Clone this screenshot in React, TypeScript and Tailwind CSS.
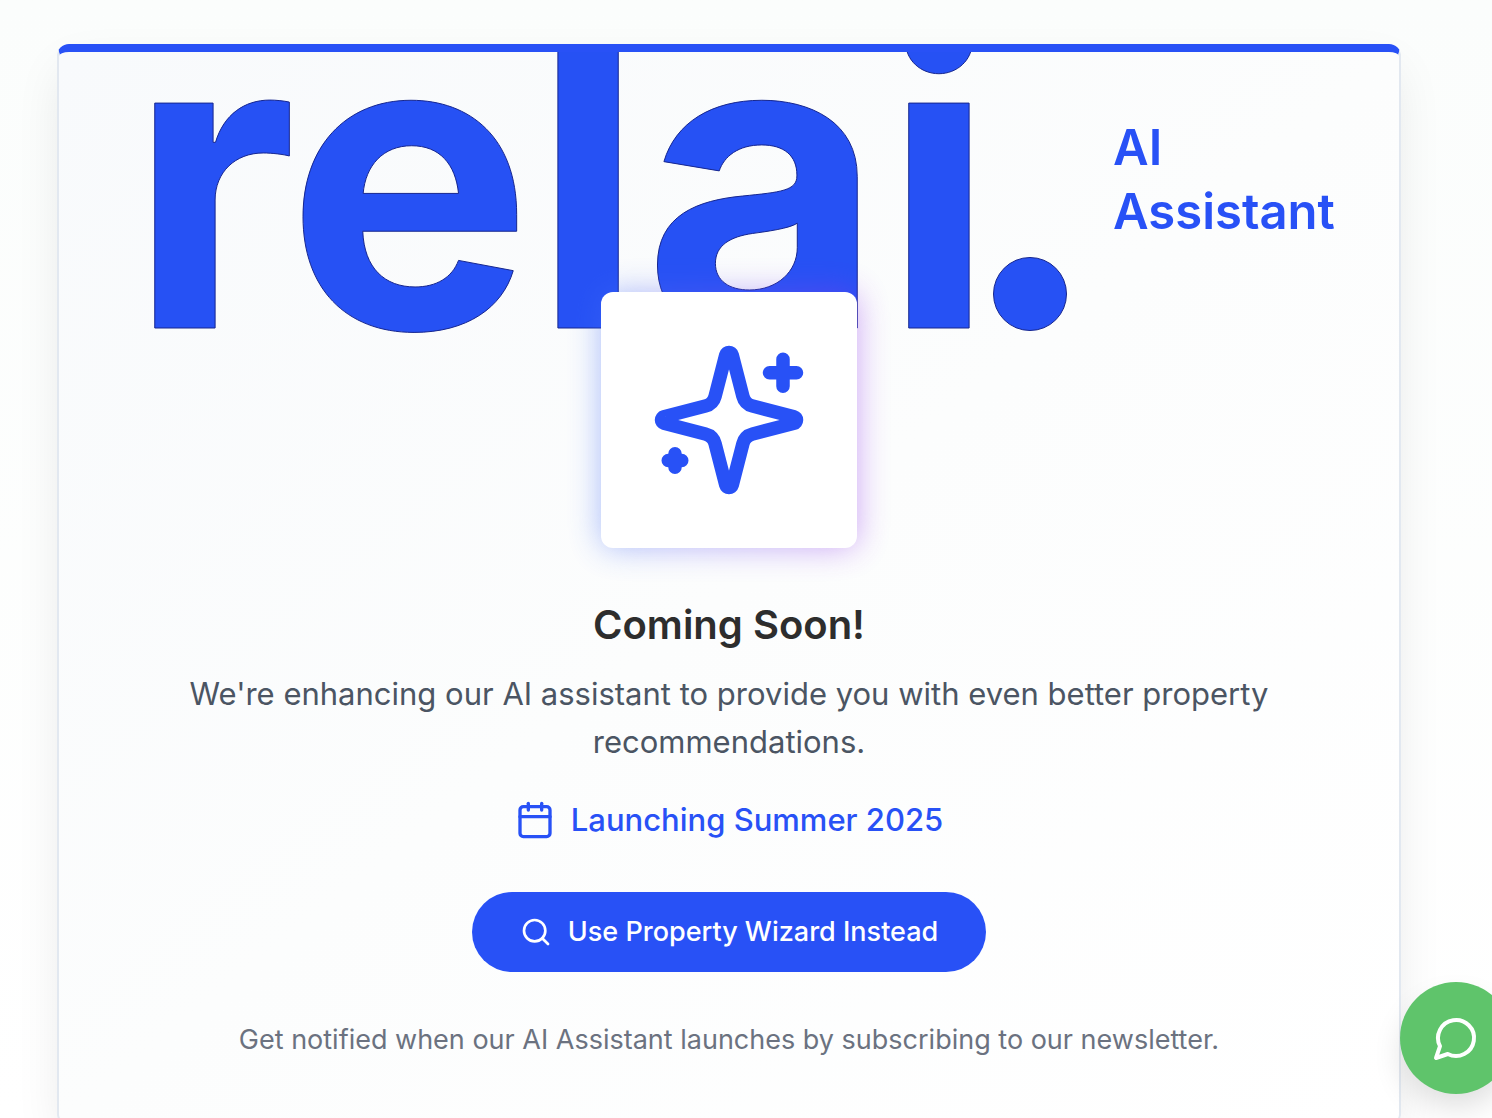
import React from "react";
import { Calendar, Search } from "lucide-react";

function Logo() {
  return (
    <svg
      viewBox="0 0 974 128"
      className="h-[128px] w-[974px] shrink-0 overflow-visible fill-[#2651f4] stroke-[#16268f] stroke-1"
      role="img"
      aria-label="relai."
    >
      <text x="6" y="212" className="font-['Inter',sans-serif] text-[412px] font-bold">
        relai
      </text>
      <circle cx="907" cy="178" r="36.5" />
    </svg>
  );
}

function Sparkles() {
  return (
    <svg
      viewBox="0 0 24 24"
      className="size-[162px] fill-none stroke-[#2851f6] stroke-2"
      strokeLinecap="round"
      strokeLinejoin="round"
      aria-hidden="true"
    >
      <path d="M9.937 15.5A2 2 0 0 0 8.5 14.063l-6.135-1.582a.5.5 0 0 1 0-.962L8.5 9.936A2 2 0 0 0 9.937 8.5l1.582-6.135a.5.5 0 0 1 .963 0L14.063 8.5A2 2 0 0 0 15.5 9.937l6.135 1.581a.5.5 0 0 1 0 .964L15.5 14.063a2 2 0 0 0-1.437 1.437l-1.582 6.135a.5.5 0 0 1-.963 0z" />
      <path d="M20 3v4M22 5h-4M4 17v2M5 18H3" />
    </svg>
  );
}

function ChatButton() {
  return (
    <button
      type="button"
      aria-label="Open chat"
      className="fixed -right-5 bottom-6 z-20 flex size-28 items-center justify-center rounded-full bg-[#5fc46b] shadow-[0_16px_32px_-4px_rgba(0,0,0,0.14)]"
    >
      <svg
        viewBox="0 0 24 24"
        className="size-12 fill-none stroke-white stroke-2"
        strokeLinecap="round"
        strokeLinejoin="round"
        aria-hidden="true"
      >
        <path d="M7.9 20A9 9 0 1 0 4 16.1L2 22Z" />
      </svg>
    </button>
  );
}

export default function App() {
  return (
    <div className="h-screen overflow-hidden bg-linear-to-b from-[#fbfdfc] to-white pt-11 pr-[91px] pl-[57px] font-['Inter',sans-serif]">
      <main className="flex flex-col items-center overflow-hidden rounded-xl border-x-2 border-t-8 border-b-2 border-x-[#e2e8f0] border-t-[#2851f6] border-b-[#e2e8f0] bg-linear-to-br from-[#f8fafc] via-[#fcfdfd] to-white px-16 pt-16 pb-16 text-center shadow-[0_20px_50px_-8px_rgba(0,0,0,0.10)]">
        <header className="flex items-center justify-center gap-4">
          <Logo />
          <h1 className="text-left text-[49px] leading-[64px] font-semibold text-[#2851f6]">
            AI
            <br />
            Assistant
          </h1>
        </header>

        <div className="relative z-10 mt-12">
          <div className="absolute inset-0 rounded-xl bg-linear-to-r from-[#3b6ef6] to-[#9333ea] opacity-45 blur-lg" />
          <div className="relative flex size-64 items-center justify-center rounded-xl bg-white">
            <Sparkles />
          </div>
        </div>

        <h2 className="mt-12 text-[40px] leading-[58px] font-semibold text-[#2d2d2d]">Coming Soon!</h2>
        <p className="mt-4 text-[31px] leading-[48px] text-[#4b5563]">
          We're enhancing our AI assistant to provide you with even better property recommendations.
        </p>

        <div className="mt-[30px] flex items-center gap-4 text-[31px] leading-[48px] font-medium text-[#2851f6]">
          <Calendar className="size-10" aria-hidden="true" />
          <span>Launching Summer 2025</span>
        </div>

        <button
          type="button"
          className="mt-12 flex h-20 items-center gap-4 rounded-full bg-[#2851f6] px-12 text-[27px] font-medium text-white"
        >
          <Search className="size-8" aria-hidden="true" />
          Use Property Wizard Instead
        </button>

        <p className="mt-12 text-[27px] leading-10 text-[#6b7280]">
          Get notified when our AI Assistant launches by subscribing to our newsletter.
        </p>
      </main>
      <ChatButton />
    </div>
  );
}
